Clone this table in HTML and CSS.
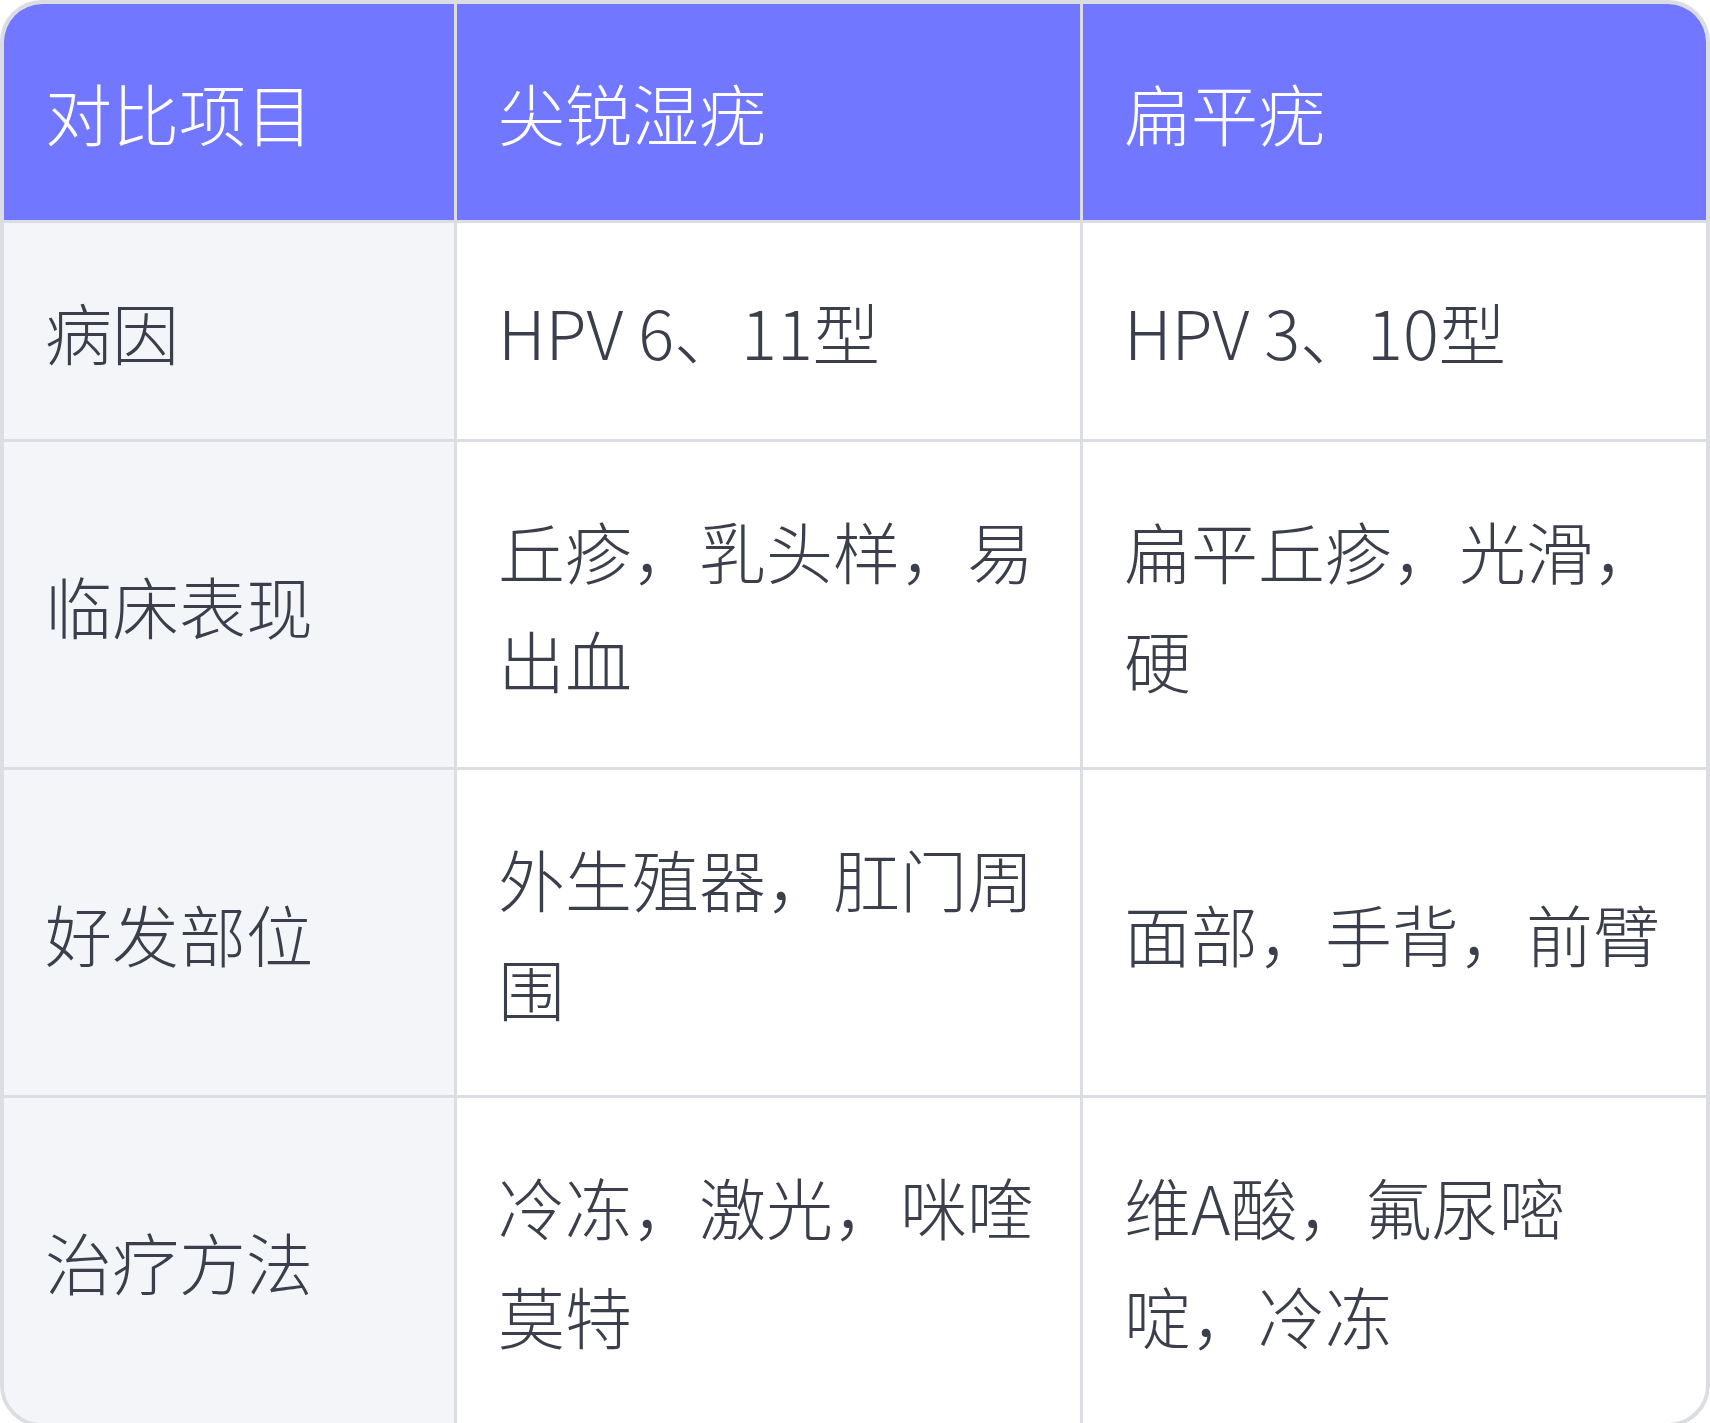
FILE: index.html
```html
<!DOCTYPE html>
<html lang="zh-CN">
<head>
<meta charset="utf-8">
<title>尖锐湿疣与扁平疣对比</title>
<link rel="stylesheet" href="styles.css">
</head>
<body>
<div class="card">
  <table class="compare">
    <colgroup>
      <col class="c1">
      <col class="c2">
      <col class="c3">
    </colgroup>
    <thead>
      <tr>
        <th>对比项目</th>
        <th>尖锐湿疣</th>
        <th>扁平疣</th>
      </tr>
    </thead>
    <tbody>
      <tr>
        <td class="label">病因</td>
        <td>HPV 6、11型</td>
        <td>HPV 3、10型</td>
      </tr>
      <tr>
        <td class="label">临床表现</td>
        <td>丘疹，乳头样，易出血</td>
        <td>扁平丘疹，光滑，硬</td>
      </tr>
      <tr>
        <td class="label">好发部位</td>
        <td>外生殖器，肛门周围</td>
        <td>面部，手背，前臂</td>
      </tr>
      <tr>
        <td class="label">治疗方法</td>
        <td>冷冻，激光，咪喹莫特</td>
        <td>维A酸，氟尿嘧啶，冷冻</td>
      </tr>
    </tbody>
  </table>
</div>
</body>
</html>
```

FILE: styles.css
```css
html, body {
  margin: 0;
  padding: 0;
  background: #ffffff;
}

.card {
  width: 1710px;
  box-sizing: border-box;
  border: 4px solid #dcdde3;
  border-radius: 42px;
  overflow: hidden;
  background: #ffffff;
}

.compare {
  width: 100%;
  border-collapse: separate;
  border-spacing: 0;
  table-layout: fixed;
  font-family: "Noto Sans CJK SC", "Noto Sans", sans-serif;
  font-weight: 300;
  font-size: 67px;
  line-height: 109px;
  color: #3b3f4b;
}

.c1 { width: 453px; }
.c2 { width: 626px; }
.c3 { width: auto; }

.compare th,
.compare td {
  padding: 53px 38px 54px 41px;
  text-align: left;
  vertical-align: middle;
  border-right: 3px solid #dcdde3;
  border-bottom: 3px solid #dcdde3;
  font-weight: 300;
}

.compare th:last-child,
.compare td:last-child {
  border-right: none;
}

.compare tbody tr:last-child td {
  border-bottom: none;
}

.compare th {
  background: #7277ff;
  color: #ffffff;
}

.compare td.label {
  background: #f4f5f9;
}
```
